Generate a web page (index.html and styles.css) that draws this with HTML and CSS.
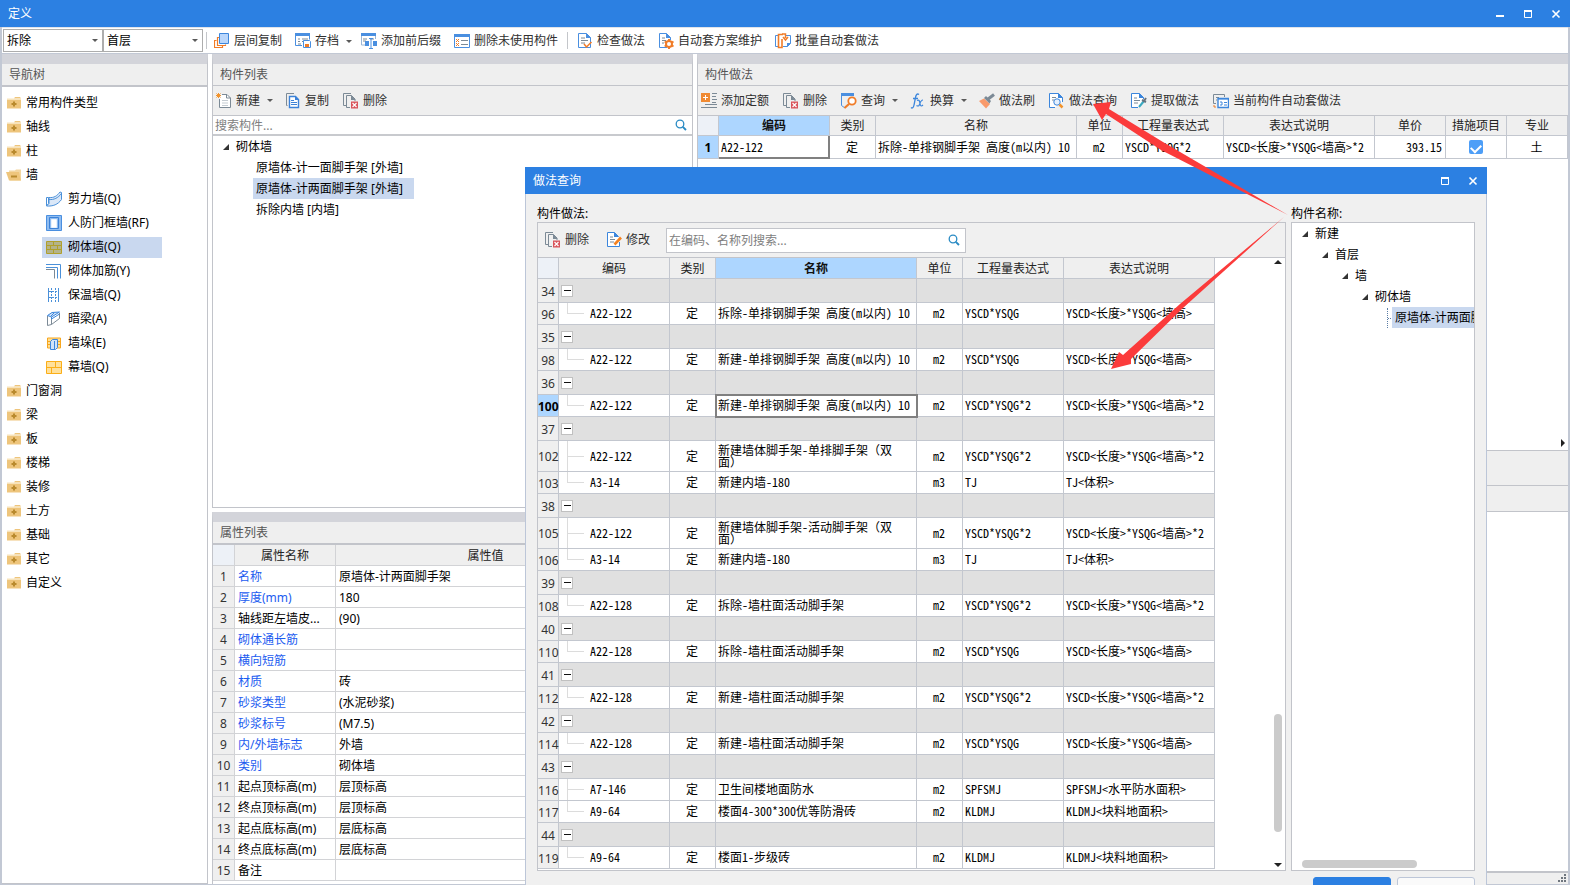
FILE: index.html
```html
<!DOCTYPE html>
<html lang="zh-CN">
<head>
<meta charset="utf-8">
<title>定义</title>
<link rel="stylesheet" href="styles.css">
</head>
<body>
<svg class="sprite" aria-hidden="true">
  <symbol id="i-folder" viewBox="0 0 16 16"><path d="M1 4.500h14v9H1z" fill="#eec57c"/><path d="M8 3.500l1-1.500h5l1 1.500z" fill="#eec57c"/><path d="M1 4h14" stroke="#f8e3b8"/><path d="M8 6.500v5M5.500 9h5" stroke="#b98a2e" stroke-width="2"/></symbol>
  <symbol id="i-open" viewBox="0 0 16 16"><path d="M3 3.500h6l1-1h5v11H4z" fill="#f3d6a0"/><path d="M0 5h13l2 8.500H3z" fill="#eec57c"/><path d="M5 9.500h6" stroke="#b98a2e" stroke-width="2"/></symbol>
  <symbol id="i-shear" viewBox="0 0 16 16"><path d="M.5 6.500h2v6l-2 2.500z" fill="#fff" stroke="#4a90d9"/><path d="M3 6.500c5 .5 8-1.500 11-5.500l1.500.5V8.500C12 13.500 7 15.500.5 15L3 12.500z" fill="#dbe8f8" stroke="#4a90d9"/><path d="M3 8.500C8 9 12 7 15.500 2.500" fill="none" stroke="#4a90d9"/></symbol>
  <symbol id="i-frame" viewBox="0 0 16 16"><path d="M.5.5h15v15H.5z" fill="#8fbcf0" stroke="#4a8fe0"/><path d="M3.500 2.500h9v11h-9z" fill="#8fbcf0" stroke="#3c82d8"/><path d="M5.500 4.500h5v8h-5z" fill="#fff" stroke="#e9f2fd"/></symbol>
  <symbol id="i-brick" viewBox="0 0 16 16"><path d="M.5 2.500h15v12H.5z" fill="#b3b38b" stroke="#b0a02c"/><path d="M0 6.500h16M0 10.500h16M7.500 2v4M4.500 6v4M11.500 6v4M7.500 10v4" stroke="#b0a02c"/></symbol>
  <symbol id="i-rebar" viewBox="0 0 16 16"><path d="M0 1.500h14.500v14" fill="none" stroke="#4a90d9"/><path d="M0 4.500h11.500v11" fill="none" stroke="#4a90d9"/><path d="M0 6.500h8.500v9" fill="none" stroke="#7c8a96"/></symbol>
  <symbol id="i-insul" viewBox="0 0 16 16"><path d="M2.500 1v14M12.500 1v14" stroke="#4a90d9"/><path d="M5.500 1v14M9.500 1v14M3 4.500h9M3 10.500h9" stroke="#4a90d9" stroke-dasharray="2 1"/></symbol>
  <symbol id="i-beam" viewBox="0 0 16 16"><path d="M1.500 5v9.500l4-1V6.500M5.500 13.500l8-6V2" fill="#fff" stroke="#7c8a96"/><path d="M1.500 4.500L6 1.500 13.500 1l-8 5z" fill="#cfe2f9" stroke="#3c86dc"/><path d="M5.500 6v2l8-5M8 2l-3 3" fill="none" stroke="#3c86dc"/></symbol>
  <symbol id="i-pier" viewBox="0 0 16 16"><path d="M1.500 3h13v10h-13z" fill="#ffdf94" stroke="#f7a61e"/><path d="M1 6.500h14M1 9.500h14" stroke="#f7a61e"/><path d="M4.500 6.500l2-2h5v8l-2 2h-5z" fill="#cfe2f9" stroke="#3c86dc"/><path d="M8.500 6v8" stroke="#3c86dc"/></symbol>
  <symbol id="i-curtain" viewBox="0 0 16 16"><path d="M.5 2.500h15v12H.5z" fill="#ffe09a" stroke="#fbae17"/><path d="M0 8.500h16M9.500 2v6M5.500 8v6" stroke="#fbae17"/></symbol>
  <symbol id="i-layers" viewBox="0 0 16 16"><path d="M2.500 7.500h-2v7h8v-2M5 4.500H3.500v8h8v-1" fill="none" stroke="#f07c28" stroke-width="1.200"/><path d="M5.500.5h9v10h-9z" fill="#b9d6fb" stroke="#3c86dc"/></symbol>
  <symbol id="i-archive" viewBox="0 0 16 16"><path d="M.5.5h14v6M.5.500v12H7" fill="none" stroke="#4a8fe0"/><path d="M0 0h15v3H0z" fill="#4a8fe0"/><path d="M3 6h2M7 6h6M3 8.500h2M3 11h3M7 8.500h1" stroke="#7c8a96"/><path d="M8.500 7.500h6l1 1v6h-7z" fill="#fff" stroke="#4a8fe0"/><path d="M10 11h4v3h-4z" fill="#f07c28"/></symbol>
  <symbol id="i-affix" viewBox="0 0 16 16"><path d="M0 0h15v3H0z" fill="#4a8fe0"/><path d="M.5 3v9H6M14.500 3v3" fill="none" stroke="#9ab6d6"/><path d="M2 6h4M2 8h3M9 6h4" stroke="#7c8a96"/><path d="M4 8h4v5H4zM12 8h4v5h-4z" fill="#4a8fe0"/><path d="M8 5.500h4M10 5.500v10M8 15.500h4" stroke="#4a8fe0"/></symbol>
  <symbol id="i-unused" viewBox="0 0 16 16"><path d="M.5 1.500h15v13H.5z" fill="#fff" stroke="#4a8fe0"/><path d="M0 1h16v3H0z" fill="#4a8fe0"/><path d="M2 6l3 3M5 6L2 9M2 10l3 3M5 10l-3 3" stroke="#f07c28"/><path d="M7 7.500h7M7 11.500h7" stroke="#7c8a96"/></symbol>
  <symbol id="i-check" viewBox="0 0 16 16"><path d="M1.500.5h8l4 4v10h-12z" fill="#fff" stroke="#4a8fe0"/><path d="M9 0v5h5z" fill="#4a8fe0"/><path d="M4 5h4M4 7.500h7M4 10h4" stroke="#7c8a96"/><path d="M7 11l2.500 3L14.500 9" fill="none" stroke="#f07c28" stroke-width="1.500"/></symbol>
  <symbol id="i-gear" viewBox="0 0 16 16"><path d="M9 14.500H1.500V.5h7l4 4V7" fill="#fff" stroke="#4a8fe0"/><path d="M8 0v5h5z" fill="#4a8fe0"/><path d="M4 5h3M4 7.500h4M4 10h2" stroke="#7c8a96"/><circle cx="11" cy="11" r="3" fill="#fff" stroke="#f07c28" stroke-width="2"/><path d="M11 6v2M11 14v2M6.700 8.500l1.500 1M14 12.500l1.500 1M6.700 13.500l1.500-1M14 9.500l1.500-1" stroke="#f07c28" stroke-width="2"/></symbol>
  <symbol id="i-batch" viewBox="0 0 16 16"><path d="M3 2.500H.5v11H3" fill="none" stroke="#4a8fe0"/><path d="M8 1.500H3.500v13H7V6" fill="none" stroke="#f07c28" stroke-width="1.600"/><path d="M11 2.500h4.500v8l-3 3H8" fill="none" stroke="#4a8fe0"/><path d="M7 1h3.500v4M8 4l2.500 3L13 4" fill="none" stroke="#f07c28" stroke-width="1.500"/><path d="M12 10h4l-4 4z" fill="#4a8fe0"/></symbol>
  <symbol id="i-new" viewBox="0 0 16 16"><path d="M6 1.500h5l3.500 3.500v9.500h-11V6" fill="#fff" stroke="#7c8a96"/><path d="M10.500 1.500V5h4" fill="none" stroke="#7c8a96"/><path d="M6 7.500h6M6 10h6M6 12.500h6" stroke="#c5ccd2"/><path d="M.5.500l4 4M4.500.500l-4 4M2.500 0v5M0 2.500h5" stroke="#f2932c"/></symbol>
  <symbol id="i-copy" viewBox="0 0 16 16"><path d="M2.500 12.500h-1V.5H9" fill="none" stroke="#7c8a96"/><path d="M4.500 3.500h6l3 3v8h-9z" fill="#fff" stroke="#3c82d8" stroke-width="1.400"/><path d="M10 3v4h4z" fill="#3c82d8"/><path d="M6 7.500h3M6 9.500h6M6 11.500h6" stroke="#3c82d8"/></symbol>
  <symbol id="i-del" viewBox="0 0 16 16"><path d="M3 12.500H.5V.5H8M7 14.500H3.500v-12h5l3.500 3.500V8" fill="none" stroke="#7c8a96"/><path d="M8 2v5h4.500z" fill="#7c8a96"/><path d="M8 8.500h7v7H8z" fill="#d9545b"/><path d="M9.500 10l4 4M13.500 10l-4 4" stroke="#fff" stroke-width="1.200"/></symbol>
  <symbol id="i-add" viewBox="0 0 16 16"><path d="M0 0h9v9H0z" fill="#f08a33"/><path d="M4.500 2v5M2 4.500h5" stroke="#fff"/><path d="M11 .5h5M11 3.500h4M11 6.500h5M11 9.500h4M4 11.500h12M0 14.500h16" stroke="#7c8a96"/></symbol>
  <symbol id="i-query" viewBox="0 0 16 16"><path d="M.5 1v11.500L4 15" fill="none" stroke="#4a8fe0"/><path d="M0 0h13v3H0z" fill="#4a8fe0"/><circle cx="11" cy="8" r="3.700" fill="#fff" stroke="#f07c28" stroke-width="1.800"/><path d="M8 11l-4.500 4" stroke="#f07c28" stroke-width="2.200"/></symbol>
  <symbol id="i-fx" viewBox="0 0 16 16"><path d="M9 1.500C7 0 6 2 5.500 4.500L4 12c-.5 3-2 3.500-3 2.500M3 5.500h5" fill="none" stroke="#3c86dc" stroke-width="1.300"/><path d="M7 7.500c2-1 2.500 0 3 3s1.500 3 3 1.500M13 7c-2 0-3 3-3.500 4.500S8 13.500 6.500 12.500" fill="none" stroke="#3c86dc" stroke-width="1.200"/></symbol>
  <symbol id="i-brush" viewBox="0 0 16 16"><path d="M0 8l5-2.500 6 5.500-4 4.500z" fill="#f99a6b"/><path d="M5 5l2-2 5 5-1.500 2.500z" fill="#7c8a96"/><path d="M8.500 6.500L15 1.500" stroke="#7c8a96" stroke-width="3"/></symbol>
  <symbol id="i-docq" viewBox="0 0 16 16"><path d="M6 14.500H.5V.5h9l4 4V9" fill="#fff" stroke="#3c86dc"/><path d="M9 0v5h5z" fill="#3c86dc"/><path d="M3 4.500h4M3 7h2" stroke="#7c8a96"/><circle cx="8" cy="9" r="3.200" fill="#e5f0fd" stroke="#3c86dc"/><path d="M10.500 11.500l3 3" stroke="#f2932c" stroke-width="2.500"/></symbol>
  <symbol id="i-extract" viewBox="0 0 16 16"><path d="M7 14.500H.5V.5h8l4 4V6" fill="#fff" stroke="#3c86dc"/><path d="M8 0v5h5z" fill="#3c86dc"/><path d="M3 5h3M3 7.500h6M3 10h4" stroke="#7c8a96"/><path d="M8 14l5-6" stroke="#39a9c0" stroke-width="2"/><path d="M11 7l4 2M13 8l2-3" stroke="#65727e" stroke-width="2"/></symbol>
  <symbol id="i-auto" viewBox="0 0 16 16"><path d="M3 10.500H.5v-9h11V4" fill="none" stroke="#7c8a96"/><path d="M3 4.500h3M3 7h1" stroke="#7c8a96"/><path d="M5 5.500h10.500v9H5z" fill="#fff" stroke="#3c86dc" stroke-width="1.400"/><path d="M5 6h10M7 9h2v3H7M11 9.500h3M11 12h3" fill="none" stroke="#3c86dc"/><path d="M1 12v2h2" fill="none" stroke="#f07c28"/></symbol>
  <symbol id="i-edit" viewBox="0 0 16 16"><path d="M13.500 10v4.500H1.500V.5h7l4 4" fill="#fff" stroke="#3c86dc"/><path d="M8 0v5h5z" fill="#3c86dc"/><path d="M4 5h3M4 7.500h5M4 10h4" stroke="#7c8a96"/><path d="M8.500 12.500L15 5.500" stroke="#f58220" stroke-width="2.600"/></symbol>
  <symbol id="i-search" viewBox="0 0 12 12"><circle cx="5" cy="5" r="3.800" fill="none" stroke="#2a8bc4" stroke-width="1.300"/><path d="M7.800 7.800L11 11" stroke="#2a8bc4" stroke-width="1.900"/></symbol>
  <symbol id="i-min" viewBox="0 0 10 10"><path d="M1 7h8" stroke="#fff" stroke-width="2"/></symbol>
  <symbol id="i-max" viewBox="0 0 10 10"><path d="M1.500 2v6.500h7V2" fill="none" stroke="#fff"/><path d="M1 2h8" stroke="#fff" stroke-width="2"/></symbol>
  <symbol id="i-close" viewBox="0 0 10 10"><path d="M1.500 1.500l7 7M8.500 1.500l-7 7" stroke="#fff" stroke-width="1.600"/></symbol>
</svg>

<div class="app">
  <header class="titlebar">
    <h1>定义</h1>
    <div class="winbtns">
      <button aria-label="最小化"><svg><use href="#i-min"/></svg></button>
      <button aria-label="最大化"><svg><use href="#i-max"/></svg></button>
      <button aria-label="关闭"><svg><use href="#i-close"/></svg></button>
    </div>
  </header>

  <div class="maintools">
    <span class="combo"><select aria-label="工程"><option>拆除</option></select><i class="caret"></i></span>
    <span class="combo"><select aria-label="楼层"><option>首层</option></select><i class="caret"></i></span>
    <i class="sep"></i>
    <button class="tool"><svg><use href="#i-layers"/></svg>层间复制</button>
    <button class="tool drop"><svg><use href="#i-archive"/></svg>存档<i class="caret"></i></button>
    <button class="tool"><svg><use href="#i-affix"/></svg>添加前后缀</button>
    <button class="tool"><svg><use href="#i-unused"/></svg>删除未使用构件</button>
    <i class="sep mid"></i>
    <button class="tool"><svg><use href="#i-check"/></svg>检查做法</button>
    <button class="tool"><svg><use href="#i-gear"/></svg>自动套方案维护</button>
    <button class="tool"><svg><use href="#i-batch"/></svg>批量自动套做法</button>
  </div>

  <main class="work">
    <section class="panel nav">
      <h2 class="thick">导航树</h2>
      <ul class="navtree">
        <li><svg><use href="#i-folder"/></svg>常用构件类型</li>
        <li><svg><use href="#i-folder"/></svg>轴线</li>
        <li><svg><use href="#i-folder"/></svg>柱</li>
        <li><svg><use href="#i-open"/></svg>墙</li>
        <li class="sub"><span><svg><use href="#i-shear"/></svg>剪力墙(Q)</span></li>
        <li class="sub"><span><svg><use href="#i-frame"/></svg>人防门框墙(RF)</span></li>
        <li class="sub"><span class="sel"><svg><use href="#i-brick"/></svg>砌体墙(Q)</span></li>
        <li class="sub"><span><svg><use href="#i-rebar"/></svg>砌体加筋(Y)</span></li>
        <li class="sub"><span><svg><use href="#i-insul"/></svg>保温墙(Q)</span></li>
        <li class="sub"><span><svg><use href="#i-beam"/></svg>暗梁(A)</span></li>
        <li class="sub"><span><svg><use href="#i-pier"/></svg>墙垛(E)</span></li>
        <li class="sub"><span><svg><use href="#i-curtain"/></svg>幕墙(Q)</span></li>
        <li><svg><use href="#i-folder"/></svg>门窗洞</li>
        <li><svg><use href="#i-folder"/></svg>梁</li>
        <li><svg><use href="#i-folder"/></svg>板</li>
        <li><svg><use href="#i-folder"/></svg>楼梯</li>
        <li><svg><use href="#i-folder"/></svg>装修</li>
        <li><svg><use href="#i-folder"/></svg>土方</li>
        <li><svg><use href="#i-folder"/></svg>基础</li>
        <li><svg><use href="#i-folder"/></svg>其它</li>
        <li><svg><use href="#i-folder"/></svg>自定义</li>
      </ul>
    </section>

    <div class="midcol">
      <section class="panel list">
        <h2>构件列表</h2>
        <div class="tools">
          <button class="tool"><svg><use href="#i-new"/></svg>新建<i class="caret"></i></button>
          <button class="tool"><svg><use href="#i-copy"/></svg>复制</button>
          <button class="tool"><svg><use href="#i-del"/></svg>删除</button>
        </div>
        <div class="find"><input type="text" placeholder="搜索构件..." aria-label="搜索构件"><svg><use href="#i-search"/></svg></div>
        <ul class="tree">
          <li class="l0"><i class="tri"></i>砌体墙</li>
          <li class="leaf"><span>原墙体-计一面脚手架 [外墙]</span></li>
          <li class="leaf"><span class="sel">原墙体-计两面脚手架 [外墙]</span></li>
          <li class="leaf"><span>拆除内墙 [内墙]</span></li>
        </ul>
      </section>

      <section class="panel props">
        <h2 class="thick">属性列表</h2>
        <table class="grid proptable">
          <colgroup><col class="w22"><col class="w101"><col><col class="w56"></colgroup>
          <thead><tr><th class="corner"></th><th>属性名称</th><th>属性值</th><th>附加</th></tr></thead>
          <tbody>
            <tr><th>1</th><td class="blue">名称</td><td>原墙体-计两面脚手架</td><td></td></tr>
            <tr><th>2</th><td class="blue">厚度(mm)</td><td>180</td><td></td></tr>
            <tr><th>3</th><td>轴线距左墙皮...</td><td>(90)</td><td></td></tr>
            <tr><th>4</th><td class="blue">砌体通长筋</td><td></td><td></td></tr>
            <tr><th>5</th><td class="blue">横向短筋</td><td></td><td></td></tr>
            <tr><th>6</th><td class="blue">材质</td><td>砖</td><td></td></tr>
            <tr><th>7</th><td class="blue">砂浆类型</td><td>(水泥砂浆)</td><td></td></tr>
            <tr><th>8</th><td class="blue">砂浆标号</td><td>(M7.5)</td><td></td></tr>
            <tr><th>9</th><td class="blue">内/外墙标志</td><td>外墙</td><td></td></tr>
            <tr><th>10</th><td class="blue">类别</td><td>砌体墙</td><td></td></tr>
            <tr><th>11</th><td>起点顶标高(m)</td><td>层顶标高</td><td></td></tr>
            <tr><th>12</th><td>终点顶标高(m)</td><td>层顶标高</td><td></td></tr>
            <tr><th>13</th><td>起点底标高(m)</td><td>层底标高</td><td></td></tr>
            <tr><th>14</th><td>终点底标高(m)</td><td>层底标高</td><td></td></tr>
            <tr><th>15</th><td>备注</td><td></td><td></td></tr>
          </tbody>
        </table>
      </section>
    </div>

    <div class="rightcol">
      <section class="panel methods">
        <h2>构件做法</h2>
        <div class="tools">
          <button class="tool"><svg><use href="#i-add"/></svg>添加定额</button>
          <button class="tool"><svg><use href="#i-del"/></svg>删除</button>
          <button class="tool"><svg><use href="#i-query"/></svg>查询<i class="caret"></i></button>
          <button class="tool"><svg><use href="#i-fx"/></svg>换算<i class="caret"></i></button>
          <button class="tool"><svg><use href="#i-brush"/></svg>做法刷</button>
          <button class="tool"><svg><use href="#i-docq"/></svg>做法查询</button>
          <button class="tool"><svg><use href="#i-extract"/></svg>提取做法</button>
          <button class="tool"><svg><use href="#i-auto"/></svg>当前构件自动套做法</button>
        </div>
        <table class="grid methodtable">
          <colgroup><col class="w21"><col class="w111"><col class="w46"><col class="w201"><col class="w46"><col class="w101"><col class="w151"><col class="w71"><col class="w61"><col></colgroup>
          <thead><tr><th class="corner"></th><th class="hot">编码</th><th>类别</th><th>名称</th><th>单位</th><th>工程量表达式</th><th>表达式说明</th><th>单价</th><th>措施项目</th><th>专业</th></tr></thead>
          <tbody><tr><th class="cur">1</th><td class="edit">A22-122</td><td class="c">定</td><td>拆除-单排钢脚手架 高度(m以内) 10</td><td class="c">m2</td><td>YSCD*YSQG*2</td><td>YSCD&lt;长度&gt;*YSQG&lt;墙高&gt;*2</td><td class="r">393.15</td><td class="c"><input type="checkbox" class="tick" checked aria-label="措施项目"></td><td class="c">土</td></tr></tbody>
        </table>
        <div class="scrollend"><i class="arrow-r"></i></div>
      </section>
      <div class="band"></div>
      <div class="band small"></div>
      <div class="lower"></div>
      <div class="status"><svg width="8" height="8" viewBox="0 0 8 8"><path d="M6 0h2v2H6zM3 3h2v2H3zM6 3h2v2H6zM0 6h2v2H0zM3 6h2v2H3zM6 6h2v2H6z" fill="#6f767e"/></svg></div>
    </div>
  </main>

  <div class="dialog" role="dialog" aria-labelledby="dlg-title">
    <header class="titlebar">
      <h1 id="dlg-title">做法查询</h1>
      <div class="winbtns">
        <button aria-label="最大化"><svg><use href="#i-max"/></svg></button>
        <button aria-label="关闭"><svg><use href="#i-close"/></svg></button>
      </div>
    </header>
    <div class="dlgbody">
      <section class="pane">
        <h3>构件做法:</h3>
        <div class="box">
          <div class="dlgtools">
            <button class="tool"><svg><use href="#i-del"/></svg>删除</button>
            <button class="tool"><svg><use href="#i-edit"/></svg>修改</button>
            <div class="find boxed"><input type="text" placeholder="在编码、名称列搜索..." aria-label="在编码、名称列搜索"><svg><use href="#i-search"/></svg></div>
          </div>
          <div class="scroller">
            <table class="grid querytable">
              <colgroup><col class="w21"><col class="w111"><col class="w46"><col class="w201"><col class="w46"><col class="w101"><col class="w151"></colgroup>
              <thead><tr><th class="corner"></th><th>编码</th><th>类别</th><th class="hot">名称</th><th>单位</th><th>工程量表达式</th><th>表达式说明</th></tr></thead>
              <tbody>
                <tr class="g"><th>34</th><td><button class="fold" aria-label="折叠"></button></td><td></td><td></td><td></td><td></td><td></td></tr>
                <tr><th>96</th><td class="code last">A22-122</td><td class="c">定</td><td>拆除-单排钢脚手架 高度(m以内) 10</td><td class="c">m2</td><td>YSCD*YSQG</td><td>YSCD&lt;长度&gt;*YSQG&lt;墙高&gt;</td></tr>
                <tr class="g"><th>35</th><td><button class="fold" aria-label="折叠"></button></td><td></td><td></td><td></td><td></td><td></td></tr>
                <tr><th>98</th><td class="code last">A22-122</td><td class="c">定</td><td>新建-单排钢脚手架 高度(m以内) 10</td><td class="c">m2</td><td>YSCD*YSQG</td><td>YSCD&lt;长度&gt;*YSQG&lt;墙高&gt;</td></tr>
                <tr class="g"><th>36</th><td><button class="fold" aria-label="折叠"></button></td><td></td><td></td><td></td><td></td><td></td></tr>
                <tr><th class="cur">100</th><td class="code last">A22-122</td><td class="c">定</td><td class="focus">新建-单排钢脚手架 高度(m以内) 10</td><td class="c">m2</td><td>YSCD*YSQG*2</td><td>YSCD&lt;长度&gt;*YSQG&lt;墙高&gt;*2</td></tr>
                <tr class="g"><th>37</th><td><button class="fold" aria-label="折叠"></button></td><td></td><td></td><td></td><td></td><td></td></tr>
                <tr class="tall"><th>102</th><td class="code">A22-122</td><td class="c">定</td><td class="wrap">新建墙体脚手架-单排脚手架<span class="full">（双面）</span></td><td class="c">m2</td><td>YSCD*YSQG*2</td><td>YSCD&lt;长度&gt;*YSQG&lt;墙高&gt;*2</td></tr>
                <tr><th>103</th><td class="code last">A3-14</td><td class="c">定</td><td>新建内墙-180</td><td class="c">m3</td><td>TJ</td><td>TJ&lt;体积&gt;</td></tr>
                <tr class="g"><th>38</th><td><button class="fold" aria-label="折叠"></button></td><td></td><td></td><td></td><td></td><td></td></tr>
                <tr class="tall"><th>105</th><td class="code">A22-122</td><td class="c">定</td><td class="wrap">新建墙体脚手架-活动脚手架<span class="full">（双面）</span></td><td class="c">m2</td><td>YSCD*YSQG*2</td><td>YSCD&lt;长度&gt;*YSQG&lt;墙高&gt;*2</td></tr>
                <tr><th>106</th><td class="code last">A3-14</td><td class="c">定</td><td>新建内墙-180</td><td class="c">m3</td><td>TJ</td><td>TJ&lt;体积&gt;</td></tr>
                <tr class="g"><th>39</th><td><button class="fold" aria-label="折叠"></button></td><td></td><td></td><td></td><td></td><td></td></tr>
                <tr><th>108</th><td class="code last">A22-128</td><td class="c">定</td><td>拆除-墙柱面活动脚手架</td><td class="c">m2</td><td>YSCD*YSQG*2</td><td>YSCD&lt;长度&gt;*YSQG&lt;墙高&gt;*2</td></tr>
                <tr class="g"><th>40</th><td><button class="fold" aria-label="折叠"></button></td><td></td><td></td><td></td><td></td><td></td></tr>
                <tr><th>110</th><td class="code last">A22-128</td><td class="c">定</td><td>拆除-墙柱面活动脚手架</td><td class="c">m2</td><td>YSCD*YSQG</td><td>YSCD&lt;长度&gt;*YSQG&lt;墙高&gt;</td></tr>
                <tr class="g"><th>41</th><td><button class="fold" aria-label="折叠"></button></td><td></td><td></td><td></td><td></td><td></td></tr>
                <tr><th>112</th><td class="code last">A22-128</td><td class="c">定</td><td>新建-墙柱面活动脚手架</td><td class="c">m2</td><td>YSCD*YSQG*2</td><td>YSCD&lt;长度&gt;*YSQG&lt;墙高&gt;*2</td></tr>
                <tr class="g"><th>42</th><td><button class="fold" aria-label="折叠"></button></td><td></td><td></td><td></td><td></td><td></td></tr>
                <tr><th>114</th><td class="code last">A22-128</td><td class="c">定</td><td>新建-墙柱面活动脚手架</td><td class="c">m2</td><td>YSCD*YSQG</td><td>YSCD&lt;长度&gt;*YSQG&lt;墙高&gt;</td></tr>
                <tr class="g"><th>43</th><td><button class="fold" aria-label="折叠"></button></td><td></td><td></td><td></td><td></td><td></td></tr>
                <tr><th>116</th><td class="code">A7-146</td><td class="c">定</td><td>卫生间楼地面防水</td><td class="c">m2</td><td>SPFSMJ</td><td>SPFSMJ&lt;水平防水面积&gt;</td></tr>
                <tr><th>117</th><td class="code last">A9-64</td><td class="c">定</td><td>楼面4-300*300优等防滑砖</td><td class="c">m2</td><td>KLDMJ</td><td>KLDMJ&lt;块料地面积&gt;</td></tr>
                <tr class="g"><th>44</th><td><button class="fold" aria-label="折叠"></button></td><td></td><td></td><td></td><td></td><td></td></tr>
                <tr><th>119</th><td class="code last">A9-64</td><td class="c">定</td><td>楼面1-步级砖</td><td class="c">m2</td><td>KLDMJ</td><td>KLDMJ&lt;块料地面积&gt;</td></tr>
              </tbody>
            </table>
            <div class="vbar"><i class="arrow-u"></i><i class="track"><i class="thumb"></i></i><i class="arrow-d"></i></div>
          </div>
        </div>
      </section>
      <section class="side">
        <h3>构件名称:</h3>
        <div class="box white">
          <ul class="tree">
            <li class="l0"><i class="tri"></i>新建</li>
            <li class="l1"><i class="tri"></i>首层</li>
            <li class="l2"><i class="tri"></i>墙</li>
            <li class="l3"><i class="tri"></i>砌体墙</li>
            <li class="l4"><i class="dots"></i><span class="sel">原墙体-计两面脚手架</span></li>
          </ul>
          <div class="hbar"><i class="thumb"></i></div>
        </div>
        <div class="actions"><button class="primary" aria-label="确定"></button><button aria-label="取消"></button></div>
      </section>
    </div>
  </div>

  <svg class="marks" width="210" height="280" viewBox="1085 95 210 280" aria-hidden="true">
    <path d="M1093 104l18-2-2 7 54 33 125 73-127-65-55-36-4 6z" fill="#fb3b3b"/>
    <path d="M1111 369l8-17 4 3 57-51 104-87-101 91-52 51 0 5z" fill="#fb3b3b"/>
  </svg>
</div>
</body>
</html>
```
FILE: styles.css
```css
* { box-sizing: border-box; }
body {
  margin: 0;
  overflow: hidden;
  font: 12px/18px "Noto Sans", "Noto Sans CJK SC", sans-serif;
  color: #000;
  background: #fff;
}
h1, h2, h3, ul { margin: 0; padding: 0; font-weight: 400; font-size: 12px; }
li { list-style: none; white-space: nowrap; }
button, input, select { font: inherit; color: inherit; margin: 0; padding: 0; border: 0; background: none; }
.sprite { position: absolute; width: 0; height: 0; }

.app { position: relative; height: 100vh; display: flex; flex-direction: column; overflow: hidden; }

.titlebar {
  flex: none;
  height: 27px;
  display: flex;
  align-items: center;
  justify-content: space-between;
  padding: 0 9px 0 8px;
  background: #2c80e2;
  color: #fff;
}
.winbtns { display: flex; gap: 18px; }
.winbtns button, .winbtns svg { display: block; width: 10px; height: 10px; }

.maintools {
  flex: none;
  height: 27px;
  display: flex;
  align-items: center;
  padding-left: 1px;
  border: solid #c2c8d4;
  border-width: 0 2px 1px;
  box-shadow: inset 0 1px #dfe3ea;
}
.combo { position: relative; width: 100px; height: 23px; border: 1px solid #adadad; }
.combo select { display: block; width: 100%; height: 100%; padding: 2px 0 0 3px; appearance: none; }
.combo .caret { position: absolute; right: 4px; top: 9px; }
.caret { flex: none; border: 3px solid transparent; border-top-color: #5a5a5a; border-bottom: 0; }
.sep { width: 1px; height: 17px; margin: 0 0 0 3px; background: #c4c6ca; }
.sep.mid { margin: 0 2px 0 3px; }
.tool { display: flex; align-items: center; gap: 4px; color: #303030; white-space: nowrap; }
.tool svg { width: 16px; height: 16px; flex: none; }
.tool .caret { margin: 0 -2px 0 3px; }
.maintools .tool { height: 22px; padding: 2px 6px 0 7px; }
.maintools .drop { padding-right: 4px; }

.work {
  flex: 1;
  min-height: 0;
  display: grid;
  grid-template-columns: 206px 481px minmax(0, 1fr);
  gap: 4px;
  border: solid #c2c8d4;
  border-width: 0 2px 1px;
}
.panel { border: 1px solid #c2c4ca; border-top: 10px solid #d3d4da; min-width: 0; overflow: hidden; background: #fff; }
.panel h2 { height: 22px; line-height: 21px; padding-left: 7px; background: #efefef; color: #555; border-bottom: 1px solid #c2c4ca; }
.panel h2.thick { height: 23px; border-bottom-width: 2px; }
.nav { border-left: 0; }
.navtree { padding-top: 4px; }
.navtree li { display: flex; align-items: center; gap: 4px; height: 24px; padding-left: 4px; }
.navtree svg { width: 16px; height: 16px; flex: none; }
.navtree .sub { padding-left: 40px; }
.sub span { display: flex; align-items: center; gap: 6px; width: 120px; height: 21px; padding-left: 4px; }
.sel { background: #c9d8ef; }

.midcol { display: grid; grid-template-rows: minmax(0, 1fr) 372px; gap: 4px; min-height: 0; }
.tools { display: flex; align-items: center; gap: 14px; height: 30px; padding-left: 3px; background: #efefef; border-bottom: 1px solid #c2c4ca; }
.find { display: flex; align-items: center; height: 20px; padding-right: 5px; border-bottom: 2px solid #c8cace; background: #fff; }
.find input { flex: 1; min-width: 0; height: 18px; padding: 2px 0 0 2px; outline: 0; }
.find input::placeholder { color: #808080; }
.find svg { width: 12px; height: 12px; }
.tree li { display: flex; align-items: center; height: 21px; }
.tri { flex: none; width: 0; height: 0; margin: 0 7px 0 1px; border-left: 6px solid transparent; border-bottom: 6px solid #333; }
.l0 { padding-left: 9px; }
.l1 { padding-left: 29px; }
.l2 { padding-left: 49px; }
.l3 { padding-left: 69px; }
.l4 { padding-left: 95px; }
.leaf { padding-left: 40px; }
.leaf span { height: 21px; line-height: 22px; padding: 0 11px 0 3px; }
.dots { flex: none; width: 5px; height: 20px; border-left: 1px dotted #5b7da5; background: linear-gradient(90deg, #5b7da5 1px, transparent 1px) 2px 10px / 2px 1px repeat-x; }
.l4 span { height: 21px; line-height: 22px; padding-left: 3px; }

.grid { border-collapse: separate; border-spacing: 0; table-layout: fixed; }
.grid th, .grid td { padding: 0; border: solid #c3c7cf; border-width: 0 1px 1px 0; overflow: hidden; white-space: nowrap; font-weight: 400; line-height: 18px; }
.grid th { padding-top: 2px; background: #efefef; color: #222; text-align: center; }
.grid tbody th { color: #333; }
.grid .corner { background: #edf1f7; }
.grid .hot { background: #add6ff; font-weight: 700; color: #111; }
.grid tbody .cur { background: #add6ff; font-weight: 700; color: #000; }
.grid td { padding-left: 3px; text-align: left; }
.grid .c { padding-left: 0; padding-right: 1px; text-align: center; }
.grid .r { padding: 0 3px; text-align: right; }
.w21 { width: 21px; }
.w22 { width: 22px; }
.w46 { width: 46px; }
.w56 { width: 56px; }
.w61 { width: 61px; }
.w71 { width: 71px; }
.w101 { width: 101px; }
.w111 { width: 111px; }
.w151 { width: 151px; }
.w201 { width: 201px; }

.proptable { width: 100%; }
.proptable th, .proptable td { height: 21px; border-color: #d2d3d6; }
.proptable td { padding-top: 2px; }
.proptable .blue { color: #1c5cf0; }
.props { border-bottom: 0; }

.methodtable { width: 100%; }
.methodtable thead th { height: 20px; padding-top: 1px; }
.methodtable tbody th, .methodtable td { height: 23px; }
.methodtable td, .querytable td { padding-left: 2px; font-family: "Noto Sans CJK SC", sans-serif; font-feature-settings: "hwid"; }
.methodtable .edit { border-right: 2px solid #808080; border-bottom: 2px solid #808080; }
.tick { display: block; width: 14px; height: 14px; margin: 0 auto; appearance: none; border-radius: 2px; background: #4d9ef7; }
.tick:checked::after { content: ""; display: block; width: 8px; height: 5px; margin: 0 auto; border: solid #fff; border-width: 0 0 2px 2px; transform: translateY(4px) rotate(-45deg); }

.rightcol { display: flex; flex-direction: column; min-width: 0; min-height: 0; }
.methods { flex: 1; display: flex; flex-direction: column; border-right: 0; }
.scrollend { flex: 1; display: flex; align-items: flex-end; justify-content: flex-end; padding: 0 3px 3px 0; }
.arrow-r { border: 4px solid transparent; border-left-color: #222; border-right: 0; }
.band { flex: none; height: 35px; background: #efefef; border-bottom: 1px solid #c2c4ca; }
.band.small { height: 26px; }
.lower { flex: none; height: 361px; border-bottom: 2px solid #c2c4ca; }
.status { flex: none; height: 11px; display: flex; justify-content: flex-end; align-items: flex-start; padding: 1px 2px 0 0; background: #efefef; }

.dialog {
  position: absolute;
  left: 525px;
  right: 83px;
  top: 167px;
  bottom: -32px;
  display: flex;
  flex-direction: column;
  background: #f0f0f0;
}
.dlgbody {
  flex: 1;
  min-height: 0;
  display: grid;
  grid-template-columns: minmax(0, 1fr) 184px;
  gap: 5px;
  padding: 10px 11px 0;
  border: solid #bcc6d8;
  border-width: 0 1px;
}
.pane, .side { display: flex; flex-direction: column; min-height: 0; min-width: 0; }
.dlgbody h3 { height: 18px; line-height: 20px; }
.box { height: 649px; display: flex; flex-direction: column; border: 1px solid #c2c4ca; overflow: hidden; }
.box.white { background: #fff; }
.dlgtools { flex: none; height: 35px; display: flex; align-items: center; padding-left: 7px; gap: 17px; border-bottom: 1px solid #c2c4ca; }
.dlgtools .find { width: 300px; margin-left: -1px; }
.find.boxed { height: 25px; border: 1px solid #c2c4ca; }
.scroller { flex: 1; min-height: 0; display: flex; justify-content: space-between; background: #fff; }
.querytable { flex: none; width: 677px; height: 0; }
.querytable thead th { height: 21px; }
.querytable tbody th, .querytable td { height: 22px; }
.querytable td { padding-bottom: 2px; }
.querytable tbody th { overflow: visible; }
.querytable .g th, .querytable .g td { height: 24px; }
.querytable .g td { background: #e0e0e0; padding: 0 0 0 2px; }
.querytable .tall th, .querytable .tall td { height: 31px; padding-bottom: 0; }
.querytable .wrap { white-space: normal; line-height: 12px; text-spacing-trim: space-all; }
.full { font-feature-settings: normal; }
.querytable .focus { outline: 2px solid #808080; outline-offset: -1px; }
.fold { display: flex; align-items: center; width: 12px; height: 12px; padding-left: 2px; background: #fff; border: 1px solid #c0c0c0; }
.fold::before { content: ""; width: 7px; height: 1px; background: #111; }
.querytable .code {
  padding-left: 31px;
  background: linear-gradient(#dcdcdc, #dcdcdc) 8px 0 / 1px 100% no-repeat, linear-gradient(#dcdcdc, #dcdcdc) 8px 50% / 17px 1px no-repeat;
}
.querytable .code.last { background-size: 1px 50%, 17px 1px; }
.vbar { width: 14px; display: flex; flex-direction: column; align-items: center; padding: 2px 0 3px; }
.track { flex: 1; display: flex; flex-direction: column; justify-content: flex-end; padding-bottom: 31px; }
.arrow-u { border: 4px solid transparent; border-bottom-color: #222; border-top: 0; }
.arrow-d { border: 4px solid transparent; border-top-color: #222; border-bottom: 0; }
.thumb { display: block; border-radius: 4px; background: #cbcbcb; }
.vbar .thumb { width: 8px; height: 118px; }
.side .tree { flex: 1; }
.hbar { padding: 0 10px 2px; }
.hbar .thumb { width: 115px; height: 8px; }
.actions { display: flex; justify-content: flex-end; gap: 6px; padding-top: 6px; }
.actions button { width: 78px; height: 26px; border: 1px solid #bcc6d8; border-radius: 3px; background: #fafafa; }
.actions .primary { background: #2c80e2; border-color: #2c80e2; }

.marks { position: absolute; left: 1085px; top: 95px; pointer-events: none; }
```
